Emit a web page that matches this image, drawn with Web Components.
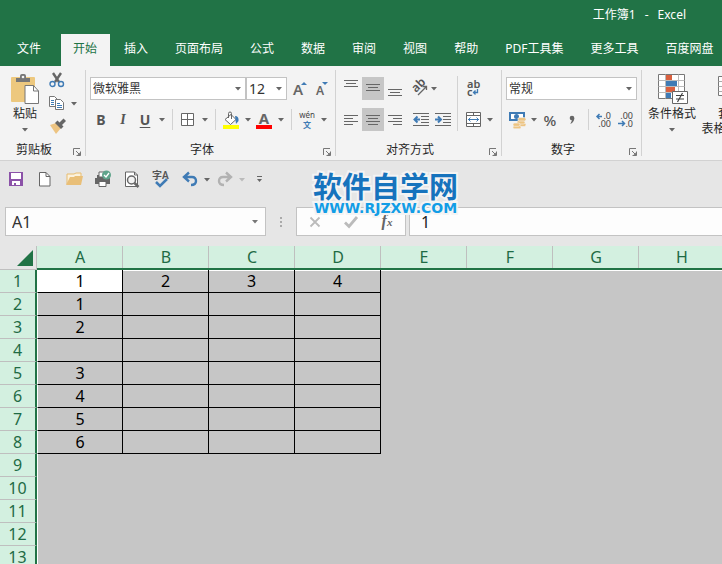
<!DOCTYPE html>
<html lang="zh-CN">
<head>
<meta charset="utf-8">
<meta name="viewport" content="width=device-width, initial-scale=1">
<title>工作簿1 - Excel</title>
<style>
  html, body { margin: 0; height: 100%; overflow: hidden; }
  body {
    font: 12px/16px "Noto Sans", "Noto Sans CJK SC", sans-serif;
    color: #262626;
    background: #e6e6e6;
    --green: #217346;
    --line: #bfbfbf;
    --ink: #666;
    --blue: #3f7bb5;
  }
</style>
</head>
<body>
<excel-window></excel-window>

<script>
const ICONS = {
  down: [6, 3, `<path d="M0 0h6L3 3.500z" fill="currentColor"/>`],
  launcher: [8, 8, `<path d="M.5 7V.5H7M3 3l4 4M7.500 3.500v4h-4" fill="none" stroke="#777"/><path d="M7.500 4v3.500H4z" fill="#777"/>`],
  paste: [28, 31, `<path d="M1 4h22q1 0 1 1v23q0 1-1 1H1q-1 0-1-1V5q0-1 1-1z" fill="#edc87e"/><path d="M5 9V5h4V3q0-2 2-2h2q2 0 2 2v2h4v4z" fill="#777"/><circle cx="12" cy="4" r="1.300" fill="#f3f3f3"/><path d="M14 12.500h8.500l5 5.500v12.500H14z" fill="#fff" stroke="#777"/><path d="M22.500 12.500V18h5" fill="none" stroke="#777"/>`],
  cut: [16, 22, `<path d="M4 3l6 9M12 3L6 12" stroke="#666" stroke-width="2.400"/><g fill="none" stroke="#3f7bb5" stroke-width="1.400"><circle cx="3.500" cy="14" r="2.500"/><circle cx="12" cy="14" r="2.500"/></g>`],
  copy: [16, 16, `<g fill="#fff" stroke="#777"><path d="M.5 1.500h5l3 3v7h-8z"/><path d="M6.500 4.500h5l3 3v7h-8z"/></g><path d="M2 5.500h3M2 7.500h3M2 9.500h3M8 8.500h3M8 10.500h5M8 12.500h5" stroke="#3f7bb5"/>`],
  brush: [17, 18, `<path d="M1 9l6-2 5 5-5 6z" fill="#edc482"/><path d="M6 7l2.500-2.500 6 6L12 13z" fill="#666"/><path d="M10 7l4.500-4.500L17 5l-4.500 4.500z" fill="#666"/>`],
  borders: [14, 14, `<path d="M.5.5h12v12H.5zM6.500.5v12M.5 6.500h12" fill="#fff" stroke="#666"/>`],
  fill: [16, 18, `<path d="M2 8.500l6-5 5 5-5.500 5z" fill="#fff" stroke="#666"/><path d="M5.500 7V2.500q0-1.500 1.500-1.500t1.500 1.500V8" fill="none" stroke="#666"/><path d="M12 5q4 0 3.500 5L13 13z" fill="#3f7bb5"/><path d="M0 14h16v4H0z" fill="#ff0"/>`],
  fontcolor: [16, 18, `<text x="8" y="13" text-anchor="middle" font-size="15" font-weight="700" fill="#666">A</text><path d="M0 14h16v4H0z" fill="red"/>`],
  pinyin: [16, 20, `<text x="8" y="8" text-anchor="middle" font-size="8" fill="#444">wén</text><text x="8" y="18" text-anchor="middle" font-size="8" font-weight="700" fill="#3f7bb5">文</text>`],
  grow: [16, 18, `<text x="6" y="15" text-anchor="middle" font-size="15" font-weight="600" fill="#666">A</text><path d="M9 5h6l-3-3z" fill="#3f7bb5"/>`],
  shrink: [16, 18, `<text x="6" y="15" text-anchor="middle" font-size="12" font-weight="600" fill="#666">A</text><path d="M8 2h6l-3 3z" fill="#3f7bb5"/>`],
  top: [14, 18, `<path d="M0 .5h14M2 3.500h10M0 6.500h14" stroke="#666"/>`],
  middle: [14, 18, `<path d="M0 4.500h14M2 7.500h10M0 10.500h14" stroke="#666"/>`],
  bottom: [14, 18, `<path d="M0 9.500h14M2 12.500h10M0 15.500h14" stroke="#666"/>`],
  left: [14, 18, `<path d="M0 4.500h14M0 7.500h9M0 10.500h14M0 13.500h9" stroke="#666"/>`],
  center: [14, 18, `<path d="M0 4.500h14M2 7.500h10M0 10.500h14M2 13.500h10" stroke="#666"/>`],
  right: [14, 18, `<path d="M0 4.500h14M5 7.500h9M0 10.500h14M5 13.500h9" stroke="#666"/>`],
  orient: [18, 18, `<text x="0" y="0" transform="translate(6 13) rotate(-45)" font-size="12" font-weight="600" fill="#555">ab</text><path d="M8 15l8-8M12.500 6.500h4V10" fill="none" stroke="#666" stroke-width="1.300"/>`],
  outdent: [16, 14, `<path d="M0 .5h16M8 3.500h8M8 6.500h8M8 9.500h8M0 12.500h16" stroke="#666"/><path d="M7 6.500H2M4.500 3.500l-3 3 3 3" fill="none" stroke="#3f7bb5" stroke-width="2"/>`],
  indent: [16, 14, `<path d="M0 .5h16M8 3.500h8M8 6.500h8M8 9.500h8M0 12.500h16" stroke="#666"/><path d="M0 6.500h5M3 3.500l3 3-3 3" fill="none" stroke="#3f7bb5" stroke-width="2"/>`],
  wrap: [14, 20, `<text x="1" y="9" font-size="11" font-weight="600" fill="#555">ab</text><text x="1" y="17" font-size="11" font-weight="600" fill="#555">c</text><path d="M11.500 10v3.500H8M9.500 11.500l-2 2 2 2" fill="none" stroke="#3f7bb5" stroke-width="1.300"/>`],
  merge: [15, 15, `<path d="M.5.500h14v14H.5z" fill="#fff" stroke="#666"/><path d="M.5 3.500h14M.5 11.500h14M7.500.5v3M7.500 11.500v3" stroke="#666"/><path d="M2 7.500h11M4.500 5.500l-2 2 2 2M10.500 5.500l2 2-2 2" fill="none" stroke="#3f7bb5"/>`],
  money: [17, 18, `<path d="M0 1h16v9H0z" fill="#3f7bb5"/><path d="M2 3h12v5H2z" fill="#fff"/><circle cx="7.500" cy="5.500" r="2.500" fill="#3f7bb5"/><g fill="#edc482" stroke="#f3f3f3" stroke-width=".6"><rect x="9" y="12" width="8" height="3.500" rx="1.700"/><rect x="8" y="9.500" width="8" height="3.500" rx="1.700"/><rect x="9" y="6.500" width="8" height="3.500" rx="1.700"/><rect x="4" y="14.500" width="8" height="3.300" rx="1.600"/><rect x="4" y="12" width="7" height="3.300" rx="1.600"/></g>`],
  comma: [6, 10, `<circle cx="3" cy="3" r="2.300" fill="#666"/><path d="M5.300 3q0 4-4 6 2-3 1.500-5z" fill="#666"/>`],
  moredec: [16, 18, `<text x="15" y="8" text-anchor="end" font-size="9" fill="#444">.0</text><text x="15" y="16" text-anchor="end" font-size="9" fill="#444">.00</text><path d="M6 5.500H1M3.500 3l-2.500 2.500L3.500 8" fill="none" stroke="#3f7bb5" stroke-width="1.500"/>`],
  lessdec: [16, 18, `<text x="15" y="8" text-anchor="end" font-size="9" fill="#444">.00</text><text x="15" y="16" text-anchor="end" font-size="9" fill="#444">.0</text><path d="M0 12.500h6M4 10l2.500 2.500L4 15" fill="none" stroke="#3f7bb5" stroke-width="1.500"/>`],
  condition: [30, 31, `<path d="M1.500 1.500h26v24h-26z" fill="#fff" stroke="#777"/><path d="M8.500 1.500v24M21.500 1.500v24M1.500 7.500h26M1.500 13.500h26M1.500 19.500h26" stroke="#bbb"/><path d="M9 2h6v5H9zM9 14h9v5H9z" fill="#d9603f"/><path d="M9 8h11v5H9zM9 20h5v5H9z" fill="#3f7bb5"/><path d="M15.500 18.500h15v12h-15z" fill="#fff" stroke="#666"/><path d="M19 22.500h8M19 26h8M25.500 20l-5 9" stroke="#444" stroke-width="1.200"/>`],
  tablestyle: [24, 31, `<path d="M.5 3.500h23v19H.5z" fill="#fff" stroke="#777"/><path d="M.5 8.500h23M.5 13.500h23M.5 18.500h23M8.500 3.500v19M16.500 3.500v19" stroke="#aaa"/><path d="M9 9h14v13H9z" fill="#3f7bb5"/>`],
  save: [14, 14, `<path d="M0 0h14v14H0z" fill="#8b52a8"/><path d="M2 1h10v6H2zM3 9h8v4H3z" fill="#fff"/><path d="M5 11h2v2H5z" fill="#8b52a8"/>`],
  page: [12, 15, `<path d="M.5.5h6.500l4 4v9.500H.5z" fill="#fff" stroke="#666"/><path d="M7 .5v4h4" fill="none" stroke="#666"/>`],
  folder: [17, 14, `<path d="M1 12V2h7l2-1h5v4" fill="#fbf1dc" stroke="#e8bd70"/><path d="M0 13L4 5h4l1-1h8l-2 9z" fill="#e9bf78"/>`],
  print: [18, 18, `<path d="M3 5h10v3H3z" fill="#666"/><path d="M5 2h7v5H5z" fill="#fff" stroke="#666"/><path d="M1 8h15v6H1z" fill="#666"/><path d="M5 11.500h7v5H5z" fill="#fff" stroke="#666"/><circle cx="12.500" cy="5" r="4.500" fill="#5fa48b"/><path d="M10 5l2 2 3-4" fill="none" stroke="#fff" stroke-width="1.300"/>`],
  preview: [16, 17, `<path d="M1.500 1h9l3 3v11.500h-12z" fill="#fff" stroke="#666"/><path d="M10.500 1v3h3" fill="none" stroke="#666"/><circle cx="7.500" cy="9" r="4" fill="#f3f3f3" stroke="#666" stroke-width="1.500"/><path d="M10.500 12l4 4" stroke="#666" stroke-width="2.500"/>`],
  spell: [18, 18, `<text x="0" y="9" font-size="10" font-weight="600" fill="#555">字A</text><path d="M4 12l4 4 7-7" fill="none" stroke="#3f7bb5" stroke-width="2.500"/>`],
  undo: [16, 14, `<path d="M3 5h7q4 0 4 4t-5 4M7 .5L2 5l5 4.500" fill="none" stroke="#3f7bb5" stroke-width="2.400"/>`],
  redo: [16, 14, `<path d="M13 5H6Q2 5 2 9t5 4M9 .5L14 5 9 9.500" fill="none" stroke="#b2b2b2" stroke-width="2.400"/>`],
  customize: [7, 8, `<path d="M1 1.500h5" stroke="#666"/><path d="M1 4h5L3.500 7z" fill="#666"/>`],
  cross: [12, 12, `<path d="M1.500 1.500l9 9M10.500 1.500l-9 9" stroke="#bbb" stroke-width="1.800"/>`],
  tick: [14, 12, `<path d="M1 6.500l4 4L13 1" fill="none" stroke="#bbb" stroke-width="2.800"/>`]
};

function define(name, template, setup) {
  const t = document.createElement("template");
  t.innerHTML = template;
  customElements.define(name, class extends HTMLElement {
    connectedCallback() {
      if (this.shadowRoot) return;
      const root = this.attachShadow({ mode: "open" });
      root.append(t.content.cloneNode(true));
      if (setup) setup(this, root);
    }
  });
}

define("ui-icon", `<style>:host{display:block;flex:none;line-height:0}svg{display:block;overflow:visible}</style>`,
  (host, root) => {
    const [w, h, body] = ICONS[host.getAttribute("name")];
    root.innerHTML += `<svg width="${w}" height="${h}" viewBox="0 0 ${w} ${h}" aria-hidden="true">${body}</svg>`;
  });

const BUTTON_RESET = `button{appearance:none;border:0;margin:0;padding:0;background:none;font:inherit;color:inherit;display:flex;align-items:center;justify-content:center}`;

define("tool-button", `
<style>
  :host{display:flex;flex:none;height:23px;color:var(--ink)}
  ${BUTTON_RESET}
  button{height:100%}
  .main{width:22px}
  :host([narrow]) .main{width:18px}
  :host([pressed]) .main{background:#c6c6c6}
  .more{width:11px}
  :host([disabled]) .more{color:#bbb}
</style>
<button class="main"><slot></slot></button>`,
  (host, root) => {
    const label = host.getAttribute("label");
    const main = root.querySelector(".main");
    main.setAttribute("aria-label", label);
    if (host.hasAttribute("pressed")) main.setAttribute("aria-pressed", "true");
    if (host.hasAttribute("icon")) main.innerHTML = `<ui-icon name="${host.getAttribute("icon")}"></ui-icon>`;
    if (host.hasAttribute("more"))
      main.insertAdjacentHTML("afterend", `<button class="more" aria-label="${label}选项"><ui-icon name="down"></ui-icon></button>`);
  });

define("large-button", `
<style>
  :host{display:block;flex:none;color:#262626}
  ${BUTTON_RESET}
  button{flex-direction:column;width:100%;padding-top:3px;white-space:nowrap}
  .name{padding-top:2px}
  .tail{display:flex;align-items:center;gap:3px;min-height:14px;line-height:14px}
  .tail ui-icon{color:var(--ink)}
</style>
<button><span class="name"><slot></slot></span><span class="tail"><slot name="second"></slot><ui-icon name="down"></ui-icon></span></button>`,
  (host, root) => root.querySelector("button").insertAdjacentHTML("afterbegin", `<ui-icon name="${host.getAttribute("icon")}"></ui-icon>`));

define("combo-box", `
<style>
  :host{display:grid;align-items:center;height:23px;box-sizing:border-box}
  select,ui-icon{grid-area:1/1}
  select{appearance:none;width:100%;height:23px;box-sizing:border-box;border:1px solid #c3c3c3;border-radius:0;background:#fff;
    padding:0 12px 0 2px;margin:0;font:inherit;color:#333}
  ui-icon{justify-self:end;margin-right:5px;pointer-events:none;color:var(--ink)}
</style>
<select></select><ui-icon name="down"></ui-icon>`,
  (host, root) => {
    const s = root.querySelector("select");
    s.setAttribute("aria-label", host.getAttribute("label"));
    s.add(new Option(host.getAttribute("value")));
  });

define("ribbon-group", `
<style>
  :host{display:flex;flex-direction:column;flex:none;box-sizing:content-box;border-right:1px solid #d2d2d2}
  .body{flex:1;display:flex}
  footer{display:flex;align-items:flex-end;line-height:12px;padding-right:4px}
  .label{flex:1;text-align:center}
  ${BUTTON_RESET}
  button{width:13px;justify-content:flex-end}
  :host([last]){border:0}
  :host([last]) footer{display:none}
</style>
<div class="body"><slot></slot></div>
<footer><span class="label"></span><button><ui-icon name="launcher"></ui-icon></button></footer>`,
  (host, root) => {
    root.querySelector(".label").textContent = host.getAttribute("label");
    root.querySelector("button").setAttribute("aria-label", host.getAttribute("label") + "设置");
  });

define("title-bar", `
<style>
  :host{display:flex;justify-content:flex-end;align-items:center;height:34px;box-sizing:border-box;
    padding:0 36px 4px 0;background:var(--green);color:#fff}
  h1{display:flex;gap:9px;margin:0;font:inherit}
</style>
<h1><span>工作簿1</span><span>-</span><span>Excel</span></h1>`);

define("ribbon-tabs", `
<style>
  :host{display:block;background:var(--green);color:#fff;overflow:hidden}
  nav{display:flex;gap:2px;height:32px}
  ${BUTTON_RESET}
  button{flex:none;padding:0 13px 2px 12px;white-space:nowrap}
  button:first-child{padding-left:17px;padding-right:18px}
  [aria-selected=true]{background:#f3f3f3;color:var(--green)}
</style>
<nav role="tablist" aria-label="功能区"></nav>`,
  (host, root) => {
    const tabs = ["文件", "开始", "插入", "页面布局", "公式", "数据", "审阅", "视图", "帮助", "PDF工具集", "更多工具", "百度网盘"];
    root.querySelector("nav").innerHTML = tabs.map(t =>
      `<button role="tab" aria-selected="${t === "开始"}">${t}</button>`).join("");
  });

define("ribbon-panel", `
<style>
  :host{display:flex;box-sizing:border-box;height:95px;padding:4px 0;background:#f3f3f3;border-bottom:1px solid #d2d2d2;overflow:hidden}
  .rows{display:flex;flex-direction:column;gap:8px;padding:7px 4px 0}
  .row{display:flex}
  .small{display:flex;flex-direction:column}
  .small tool-button{height:22px}
  .rule{flex:none;width:1px;height:21px;margin:1px 4px 0 5px;background:#d2d2d2}
  .tall{flex:none;width:1px;height:55px;margin-top:6px;background:#d2d2d2}
  .indent{margin-left:4px}
  .clipboard{width:85px}.font{width:249px}.align{width:165px}.number{width:139px}
  .face{width:156px}.size{width:41px;margin-right:2px;font-size:14px}.format{width:131px}
  .paste{width:42px;margin-left:4px}.condition{width:50px;margin-left:5px}.style{width:60px;margin-left:3px}
  .align .rows:first-of-type{padding-right:3px}
  b,i,u{font-size:14px;color:#555}
  i{font-family:"Liberation Serif",serif;font-weight:700}
  u{font-weight:700;text-underline-offset:2px}
  .percent{font-size:15px;font-weight:500;color:#555}
</style>
<ribbon-group class="clipboard" label="剪贴板">
  <large-button class="paste" icon="paste">粘贴</large-button>
  <div class="small">
    <tool-button icon="cut" label="剪切"></tool-button>
    <tool-button icon="copy" label="复制" more></tool-button>
    <tool-button icon="brush" label="格式刷"></tool-button>
  </div>
</ribbon-group>
<ribbon-group class="font" label="字体">
  <div class="rows">
    <div class="row">
      <combo-box class="face" label="字体" value="微软雅黑"></combo-box>
      <combo-box class="size" label="字号" value="12"></combo-box>
      <tool-button icon="grow" label="增大字号"></tool-button>
      <tool-button icon="shrink" label="减小字号"></tool-button>
    </div>
    <div class="row">
      <tool-button label="加粗"><b>B</b></tool-button>
      <tool-button label="倾斜"><i>I</i></tool-button>
      <tool-button label="下划线" more><u>U</u></tool-button>
      <span class="rule"></span>
      <tool-button icon="borders" label="边框" more></tool-button>
      <span class="rule"></span>
      <tool-button icon="fill" label="填充颜色" more></tool-button>
      <tool-button icon="fontcolor" label="字体颜色" more></tool-button>
      <span class="rule"></span>
      <tool-button icon="pinyin" label="拼音" more></tool-button>
    </div>
  </div>
</ribbon-group>
<ribbon-group class="align" label="对齐方式">
  <div class="rows">
    <div class="row">
      <tool-button icon="top" label="顶端对齐"></tool-button>
      <tool-button icon="middle" label="垂直居中" pressed></tool-button>
      <tool-button icon="bottom" label="底端对齐"></tool-button>
      <tool-button class="indent" icon="orient" label="方向" narrow more></tool-button>
    </div>
    <div class="row">
      <tool-button icon="left" label="左对齐"></tool-button>
      <tool-button icon="center" label="居中" pressed></tool-button>
      <tool-button icon="right" label="右对齐"></tool-button>
      <tool-button class="indent" icon="outdent" label="减少缩进量"></tool-button>
      <tool-button icon="indent" label="增加缩进量"></tool-button>
    </div>
  </div>
  <span class="tall"></span>
  <div class="rows">
    <tool-button icon="wrap" label="自动换行"></tool-button>
    <tool-button icon="merge" label="合并后居中" more></tool-button>
  </div>
</ribbon-group>
<ribbon-group class="number" label="数字">
  <div class="rows">
    <combo-box class="format" label="数字格式" value="常规"></combo-box>
    <div class="row">
      <tool-button icon="money" label="会计数字格式" more></tool-button>
      <tool-button label="百分比样式"><span class="percent">%</span></tool-button>
      <tool-button icon="comma" label="千位分隔样式"></tool-button>
      <span class="rule"></span>
      <tool-button icon="moredec" label="增加小数位数"></tool-button>
      <tool-button icon="lessdec" label="减少小数位数"></tool-button>
    </div>
  </div>
</ribbon-group>
<ribbon-group last label="样式">
  <large-button class="condition" icon="condition">条件格式</large-button>
  <large-button class="style" icon="tablestyle">套用<span slot="second">表格格式</span></large-button>
</ribbon-group>`);

define("quick-access", `
<style>
  :host{display:flex;align-items:center;gap:7px;height:36px;padding-left:5px}
  .history{display:flex;gap:2px}
  ${BUTTON_RESET}
  .customize{width:11px;height:23px}
</style>
<tool-button icon="save" label="保存"></tool-button>
<tool-button icon="page" label="新建"></tool-button>
<tool-button icon="folder" label="打开"></tool-button>
<tool-button icon="print" label="快速打印"></tool-button>
<tool-button icon="preview" label="打印预览"></tool-button>
<tool-button icon="spell" label="拼写检查"></tool-button>
<div class="history">
  <tool-button icon="undo" label="撤消" more></tool-button>
  <tool-button icon="redo" label="恢复" more disabled></tool-button>
</div>
<button class="customize" aria-label="自定义快速访问工具栏"><ui-icon name="customize"></ui-icon></button>`);

define("formula-bar", `
<style>
  :host{display:flex;padding:10px 0 10px 5px}
  .box{display:flex;box-sizing:border-box;height:29px;border:1px solid #c3c3c3;background:#fdfdfd}
  ${BUTTON_RESET}
  input{flex:1;min-width:0;border:0;margin:0;padding:0 0 0 6px;background:none;outline:0;font:inherit;font-size:16px;color:#333}
  .name{width:261px}
  .name button{width:20px;color:#777}
  .handle{flex:none;width:30px;display:flex;flex-direction:column;align-items:center;justify-content:center;gap:2px}
  .handle i{width:2px;height:2px;background:#aaa}
  .actions{width:110px;margin-right:3px}
  .actions button{flex:1}
  .fx{font:italic 700 16px/20px "Liberation Serif",serif;color:#666}
  .fx small{font-size:11px}
  .value{flex:1;border-right:0}
  .value input{padding-left:11px;color:#222}
</style>
<div class="box name"><input aria-label="名称框" value="A1"><button aria-label="名称列表"><ui-icon name="down"></ui-icon></button></div>
<div class="handle"><i></i><i></i><i></i></div>
<div class="box actions">
  <button aria-label="取消"><ui-icon name="cross"></ui-icon></button>
  <button aria-label="输入"><ui-icon name="tick"></ui-icon></button>
  <button aria-label="插入函数"><span class="fx">f<small>x</small></span></button>
</div>
<div class="box value"><input aria-label="编辑栏" value="1"></div>`);

define("sheet-grid", `
<style>
  :host{display:block;flex:1;min-height:0;overflow:hidden;background:#c6c6c6;color:#000;font-size:16px;line-height:20px}
  table{border-collapse:separate;border-spacing:0;table-layout:fixed;width:max-content}
  th,td{box-sizing:border-box;width:86px;height:23px;padding:0;text-align:center;font-weight:400;overflow:hidden}
  th{background:#d3f0e0;color:#1f6b45}
  thead th{height:24px;padding-bottom:2px;border-right:1px solid var(--line);box-shadow:inset 0 -2px var(--green)}
  thead th:not(:first-child){border-right:0;
    background:linear-gradient(var(--green),var(--green)) 0 100%/100% 2px no-repeat,linear-gradient(var(--line),var(--line)) 100% 0/1px 100% no-repeat,#d3f0e0}
  thead th:first-child{width:37px;padding:0;background:#e6e6e6;border-bottom:1px solid var(--line);box-shadow:none}
  thead svg{display:block;margin:0 3px 0 auto}
  tbody th{width:37px;border-right:2px solid var(--green);border-bottom:1px solid var(--line)}
  td.used{border-right:1px solid #000;border-bottom:1px solid #000}
  tbody tr:first-child td{box-shadow:inset 0 1px #fff}
  td:nth-child(2){border-left:1px solid #fff}
  td.active{background:#fff}
</style>
<table aria-label="工作表"><thead></thead><tbody></tbody></table>`,
  (host, root) => {
    const data = [["1", "2", "3", "4"], ["1"], ["2"], [], ["3"], ["4"], ["5"], ["6"]];
    const columns = Math.ceil((innerWidth - 37) / 86);
    const rows = Math.ceil((innerHeight - 270) / 23);
    const range = n => [...Array(n).keys()];
    const letter = n => (n > 25 ? letter(Math.floor(n / 26) - 1) : "") + String.fromCharCode(65 + n % 26);
    root.querySelector("thead").innerHTML =
      `<tr><th aria-label="全选"><svg width="16" height="16" viewBox="0 0 16 16"><path d="M16 0v16H0z" fill="#217346"/></svg></th>` +
      range(columns).map(c => `<th scope="col">${letter(c)}</th>`).join("") + `</tr>`;
    root.querySelector("tbody").innerHTML = range(rows).map(r =>
      `<tr><th scope="row">${r + 1}</th>` + range(columns).map(c => {
        const cls = (r < 8 && c < 4 ? "used" : "") + (r + c === 0 ? " active" : "");
        return `<td class="${cls}">${(data[r] || [])[c] || ""}</td>`;
      }).join("") + `</tr>`).join("");
  });

define("site-mark", `
<style>
  :host{display:block;text-align:center;white-space:nowrap;pointer-events:none;paint-order:stroke fill;-webkit-text-stroke:4px #f4f4f4}
  strong,span{display:block}
  strong{font:700 29px/31px "Noto Sans CJK SC",sans-serif;color:#1673bd}
  span{font:700 14px/14px "DejaVu Sans",sans-serif;color:#129de6}
</style>
<strong>软件自学网</strong><span>WWW.RJZXW.COM</span>`);

define("excel-window", `
<style>
  :host{display:flex;flex-direction:column;height:100vh;overflow:hidden}
  .bars{position:relative}
  site-mark{position:absolute;left:313px;top:9px}
</style>
<title-bar></title-bar>
<ribbon-tabs></ribbon-tabs>
<ribbon-panel></ribbon-panel>
<div class="bars">
  <quick-access></quick-access>
  <formula-bar></formula-bar>
  <site-mark></site-mark>
</div>
<sheet-grid></sheet-grid>`);
</script>
</body>
</html>
